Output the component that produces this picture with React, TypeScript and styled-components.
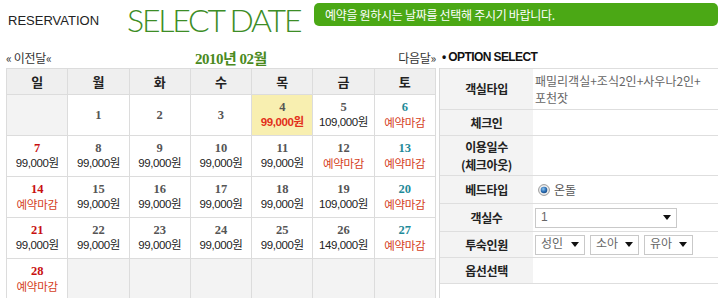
import React from "react";
import styled, { createGlobalStyle } from "styled-components";

const Global = createGlobalStyle`
  html, body { margin: 0; padding: 0; background: #fff; }
  body {
    font-family: "Noto Sans CJK KR", "Liberation Sans", sans-serif;
    font-size: 12px;
    color: #333;
    width: 723px;
    height: 298px;
    overflow: hidden;
  }
`;

const Page = styled.div`
  width: 723px;
`;

const Header = styled.header`
  display: flex;
  align-items: flex-start;
  height: 46px;
`;

const Reservation = styled.div`
  flex: 0 0 127px;
  box-sizing: border-box;
  padding: 14px 0 0 8px;
  font-family: "Liberation Sans", sans-serif;
  font-size: 13px;
  line-height: 14px;
  color: #222;
`;

const Title = styled.h1`
  flex: 0 0 187px;
  margin: 0;
  font-family: Lato, "Liberation Sans", sans-serif;
  font-weight: 300;
  font-size: 32px;
  line-height: 39px;
  color: #3d8d26;
  letter-spacing: -2.2px;
  white-space: nowrap;
`;

const Notice = styled.div`
  margin-top: 3px;
  width: 404px;
  height: 23px;
  box-sizing: border-box;
  padding-left: 11px;
  border-radius: 5px;
  background: #4ba815;
  color: #fff;
  font-size: 12px;
  line-height: 23px;
  letter-spacing: -0.3px;
`;

const Main = styled.div`
  display: flex;
  padding-left: 6px;
`;

const Left = styled.section`
  width: 430px;
`;

const NavRow = styled.div`
  display: flex;
  justify-content: space-between;
  align-items: center;
  height: 22px;
`;

const NavLink = styled.span`
  font-size: 12px;
  color: #333;
  letter-spacing: -0.3px;
`;

const MonthTitle = styled.span`
  margin-left: 12px;
  font-family: "Liberation Serif", "Noto Sans CJK KR", serif;
  font-weight: bold;
  font-size: 15px;
  color: #4a8a1e;
  letter-spacing: -0.5px;
`;

const Calendar = styled.div`
  display: grid;
  grid-template-columns: repeat(7, 1fr);
  grid-template-rows: 25px repeat(5, 40px);
  gap: 1px;
  padding: 1px;
  background: #dcdcdc;
`;

const DayHead = styled.div`
  display: flex;
  align-items: center;
  justify-content: center;
  background: #efefef;
  font-weight: bold;
  font-size: 13px;
  color: #222;
`;

const Cell = styled.div<{ $empty?: boolean; $hl?: boolean }>`
  display: flex;
  flex-direction: column;
  align-items: center;
  justify-content: center;
  background: ${(p) => (p.$empty ? "#f3f3f3" : p.$hl ? "#f8efb0" : "#fff")};
`;

const DayNum = styled.div<{ $tone: "sun" | "sat" | "day" }>`
  font-family: "Liberation Serif", serif;
  font-weight: bold;
  font-size: 12.5px;
  line-height: 14px;
  color: ${(p) => (p.$tone === "sun" ? "#c80f0f" : p.$tone === "sat" ? "#1e8a99" : "#555")};
`;

const Price = styled.div<{ $hl?: boolean }>`
  font-family: "Liberation Sans", "Noto Sans CJK KR", sans-serif;
  font-size: 11.5px;
  line-height: 16px;
  letter-spacing: -0.4px;
  color: ${(p) => (p.$hl ? "#e2301a" : "#222")};
  font-weight: ${(p) => (p.$hl ? "bold" : "normal")};
`;

const Closed = styled.div`
  font-size: 11.5px;
  line-height: 16px;
  letter-spacing: -0.3px;
  color: #d5401c;
`;

const Right = styled.section`
  margin-left: 3px;
  width: 279px;
`;

const OptionTitle = styled.div`
  height: 22px;
  display: flex;
  align-items: center;
  padding-left: 3px;
  font-family: "Liberation Sans", sans-serif;
  font-weight: bold;
  font-size: 12px;
  letter-spacing: -0.6px;
  color: #111;
  white-space: nowrap;
`;

const OptionBody = styled.div`
  border-left: 1px solid #d8d8d8;
  height: 240px;
`;

const OptionGrid = styled.div`
  display: grid;
  grid-template-columns: 93px 185px;
  border-bottom: 1px solid #dedede;
`;

const Label = styled.div<{ $h: number }>`
  height: ${(p) => p.$h - 1}px;
  border-top: 1px solid #dedede;
  background: #f3f3f3;
  display: flex;
  align-items: center;
  justify-content: center;
  text-align: center;
  font-weight: bold;
  font-size: 12px;
  line-height: 18px;
  letter-spacing: -0.4px;
  color: #222;
`;

const Value = styled.div<{ $h: number }>`
  height: ${(p) => p.$h - 1}px;
  border-top: 1px solid #dedede;
  display: flex;
  align-items: center;
  gap: 5px;
  padding-left: 2px;
  font-size: 12px;
  line-height: 17px;
  color: #666;
`;

const RadioWrap = styled.label`
  display: flex;
  align-items: center;
  gap: 4px;
  padding-left: 3px;
  color: #555;
`;

const Select = styled.div<{ $w: number }>`
  width: ${(p) => p.$w}px;
  height: 20px;
  box-sizing: border-box;
  border: 1px solid #c9c9c9;
  display: flex;
  align-items: center;
  justify-content: space-between;
  padding: 0 5px 0 5px;
  font-family: "Liberation Sans", "Noto Sans CJK KR", sans-serif;
  font-size: 12px;
  color: #666;
  background: #fff;
`;

const Arrow = () => (
  <svg width="8" height="5" viewBox="0 0 8 5">
    <polygon points="0,0 8,0 4,5" fill="#111" />
  </svg>
);

const Radio = () => (
  <svg width="12" height="12" viewBox="0 0 12 12">
    <defs>
      <radialGradient id="rb" cx="0.4" cy="0.35" r="0.7">
        <stop offset="0" stopColor="#8ec5f0" />
        <stop offset="0.6" stopColor="#2a6db3" />
        <stop offset="1" stopColor="#1b4a82" />
      </radialGradient>
    </defs>
    <circle cx="6" cy="6" r="5.4" fill="#eeeeee" stroke="#9a9a9a" strokeWidth="1" />
    <circle cx="6" cy="6" r="3.3" fill="url(#rb)" />
  </svg>
);

type Day = { d?: number; price?: string; closed?: boolean; hl?: boolean };

const weeks: Day[][] = [
  [{}, { d: 1 }, { d: 2 }, { d: 3 }, { d: 4, price: "99,000원", hl: true }, { d: 5, price: "109,000원" }, { d: 6, closed: true }],
  [
    { d: 7, price: "99,000원" },
    { d: 8, price: "99,000원" },
    { d: 9, price: "99,000원" },
    { d: 10, price: "99,000원" },
    { d: 11, price: "99,000원" },
    { d: 12, closed: true },
    { d: 13, closed: true },
  ],
  [
    { d: 14, closed: true },
    { d: 15, price: "99,000원" },
    { d: 16, price: "99,000원" },
    { d: 17, price: "99,000원" },
    { d: 18, price: "99,000원" },
    { d: 19, price: "109,000원" },
    { d: 20, closed: true },
  ],
  [
    { d: 21, price: "99,000원" },
    { d: 22, price: "99,000원" },
    { d: 23, price: "99,000원" },
    { d: 24, price: "99,000원" },
    { d: 25, price: "99,000원" },
    { d: 26, price: "149,000원" },
    { d: 27, closed: true },
  ],
  [{ d: 28, closed: true }, {}, {}, {}, {}, {}, {}],
];

const heads = ["일", "월", "화", "수", "목", "금", "토"];

export default function App() {
  return (
    <Page>
      <Global />
      <Header>
        <Reservation>RESERVATION</Reservation>
        <Title>SELECT DATE</Title>
        <Notice>예약을 원하시는 날짜를 선택해 주시기 바랍니다.</Notice>
      </Header>
      <Main>
        <Left>
          <NavRow>
            <NavLink>« 이전달«</NavLink>
            <MonthTitle>2010년 02월</MonthTitle>
            <NavLink>다음달»</NavLink>
          </NavRow>
          <Calendar>
            {heads.map((h) => (
              <DayHead key={h}>{h}</DayHead>
            ))}
            {weeks.map((w, wi) =>
              w.map((c, ci) => (
                <Cell key={`${wi}-${ci}`} $empty={c.d === undefined} $hl={c.hl}>
                  {c.d !== undefined && (
                    <DayNum $tone={ci === 0 ? "sun" : ci === 6 ? "sat" : "day"}>{c.d}</DayNum>
                  )}
                  {c.price && <Price $hl={c.hl}>{c.price}</Price>}
                  {c.closed && <Closed>예약마감</Closed>}
                </Cell>
              ))
            )}
          </Calendar>
        </Left>
        <Right>
          <OptionTitle>• OPTION SELECT</OptionTitle>
          <OptionBody>
            <OptionGrid>
              <Label $h={41}>객실타입</Label>
              <Value $h={41}>
                패밀리객실+조식2인+사우나2인+
                <br />
                포천잣
              </Value>
              <Label $h={26}>체크인</Label>
              <Value $h={26} />
              <Label $h={40}>
                이용일수
                <br />
                (체크아웃)
              </Label>
              <Value $h={40} />
              <Label $h={28}>베드타입</Label>
              <Value $h={28}>
                <RadioWrap>
                  <Radio />
                  온돌
                </RadioWrap>
              </Value>
              <Label $h={28}>객실수</Label>
              <Value $h={28}>
                <Select $w={142}>
                  1
                  <Arrow />
                </Select>
              </Value>
              <Label $h={26}>투숙인원</Label>
              <Value $h={26}>
                <Select $w={50}>
                  성인
                  <Arrow />
                </Select>
                <Select $w={49}>
                  소아
                  <Arrow />
                </Select>
                <Select $w={49}>
                  유아
                  <Arrow />
                </Select>
              </Value>
              <Label $h={26}>옵선선택</Label>
              <Value $h={26} />
            </OptionGrid>
          </OptionBody>
        </Right>
      </Main>
    </Page>
  );
}
